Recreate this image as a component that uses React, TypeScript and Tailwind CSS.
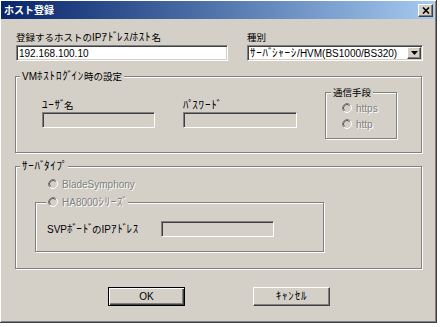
import React from "react";

// Win classic 3D edges
const sunken =
  "border border-t-[#808080] border-l-[#808080] border-r-white border-b-white shadow-[inset_1px_1px_0_#404040,inset_-1px_-1px_0_#d4d0c8]";
const raised =
  "border border-t-white border-l-white border-r-[#404040] border-b-[#404040] shadow-[inset_-1px_-1px_0_#808080,inset_1px_1px_0_#d4d0c8]";
const etched =
  "border border-[#808080] shadow-[inset_1px_1px_0_#fff,1px_1px_0_#fff]";
const disabledText = "text-[#808080] [text-shadow:1px_1px_0_#fff]";

// split mixed text so kanji/kana get a narrower size, half-width kana get spacing
// and the half-width dakuten sit tight against the previous kana
function J({ children }: { children: string }) {
  const runs =
    children.match(
      /[\uFF9E\uFF9F]+|[\uFF61-\uFF9D]+|[\u3000-\u30FF\u4E00-\u9FFF]+|[^\u3000-\u30FF\u4E00-\u9FFF\uFF61-\uFF9F]+/g
    ) ?? [];
  return (
    <>
      {runs.map((r, i) => {
        const c = r.charCodeAt(0);
        if (c === 0xff9e || c === 0xff9f)
          return (
            <span key={i} className="ml-[-1px] text-[11px] tracking-[-1.5px]">
              {r}
            </span>
          );
        if (c >= 0xff61 && c <= 0xff9d)
          return (
            <span key={i} className="text-[11px] tracking-[0.8px]">
              {r}
            </span>
          );
        if (c >= 0x3000 && c <= 0x9fff)
          return (
            <span key={i} className="text-[9.5px]">
              {r}
            </span>
          );
        return <span key={i}>{r}</span>;
      })}
    </>
  );
}

function Radio() {
  return (
    <svg width="10" height="10" viewBox="0 0 10 10" className="shrink-0">
      <circle cx="5" cy="5" r="4.5" fill="#d4d0c8" />
      <path d="M1.82 8.18 A4.5 4.5 0 0 1 8.18 1.82" fill="none" stroke="#808080" strokeWidth="1" />
      <path d="M8.18 1.82 A4.5 4.5 0 0 1 1.82 8.18" fill="none" stroke="#ffffff" strokeWidth="1" />
      <path d="M2.52 7.48 A3.5 3.5 0 0 1 7.48 2.52" fill="none" stroke="#404040" strokeWidth="0.8" />
    </svg>
  );
}

function RadioRow({ label, className }: { label: string; className?: string }) {
  return (
    <div className={"flex h-[16px] items-center gap-[4px] " + (className ?? "")}>
      <Radio />
      <span className={"whitespace-nowrap " + disabledText}>
        <J>{label}</J>
      </span>
    </div>
  );
}

export default function App() {
  return (
    <div className="min-h-screen bg-white font-['Liberation_Sans','Noto_Sans_CJK_JP',sans-serif] text-[10px] leading-[13px] text-black">
      <div className="h-[323px] w-[437px] border-r border-b border-r-[#404040] border-b-[#404040] bg-[#d4d0c8] pt-[1px] pr-[2px] pl-[1px] shadow-[inset_1px_1px_0_#fff,inset_-1px_-1px_0_#808080]">
        {/* title bar */}
        <div className="flex h-[18px] items-center justify-between bg-linear-to-r from-[#0a246a] to-[#a6caf0] pl-[3px]">
          <span className="text-[10px] font-bold text-white">ホスト登録</span>
          <div className={"mr-[1px] flex h-[13px] w-[15px] items-center justify-center bg-[#d4d0c8] " + raised}>
            <svg width="8" height="7" viewBox="0 0 8 7">
              <path d="M1 0.5 L7 6.5 M7 0.5 L1 6.5" stroke="#000" strokeWidth="1.6" />
            </svg>
          </div>
        </div>

        {/* host + type */}
        <div className="mt-[12px] flex">
          <div className="ml-[15px] w-[212px]">
            <div className="whitespace-nowrap">
              <J>登録するホストのIPｱﾄﾞﾚｽ/ﾎｽﾄ名</J>
            </div>
            <div className={"mt-[1px] flex h-[16px] items-center bg-white pl-[2px] " + sunken}>192.168.100.10</div>
          </div>
          <div className="ml-[19px] w-[176px]">
            <div>
              <J>種別</J>
            </div>
            <div className={"mt-[1px] flex h-[16px] items-center justify-between bg-white pl-[2px] pr-[1px] " + sunken}>
              <span className="whitespace-nowrap">
                <J>ｻｰﾊﾞｼｬｰｼ/HVM(BS1000/BS320)</J>
              </span>
              <div className={"flex h-[12px] w-[14px] shrink-0 items-center justify-center bg-[#d4d0c8] " + raised}>
                <svg width="7" height="4" viewBox="0 0 7 4">
                  <path d="M0 0 H7 L3.5 4 Z" fill="#000" />
                </svg>
              </div>
            </div>
          </div>
        </div>

        {/* VM login settings */}
        <fieldset className={"mt-[9px] ml-[14px] w-[407px] " + etched}>
          <legend className="ml-[4px] bg-[#d4d0c8] px-[2px]">
            <J>VMﾎｽﾄﾛｸﾞｲﾝ時の設定</J>
          </legend>
          <div className="flex items-start pb-[13px]">
            <div className="mt-[16px] ml-[26px] w-[113px]">
              <div>
                <J>ﾕｰｻﾞ名</J>
              </div>
              <div className={"h-[16px] " + sunken} />
            </div>
            <div className="mt-[16px] ml-[28px] w-[114px]">
              <div>
                <J>ﾊﾟｽﾜｰﾄﾞ</J>
              </div>
              <div className={"h-[16px] " + sunken} />
            </div>
            <fieldset className={"mt-[3px] ml-[28px] w-[72px] " + etched}>
              <legend className="ml-[5px] bg-[#d4d0c8] px-[2px]">
                <J>通信手段</J>
              </legend>
              <div className="pt-[1px] pb-[6px] pl-[16px]">
                <RadioRow label="https" />
                <RadioRow label="http" />
              </div>
            </fieldset>
          </div>
        </fieldset>

        {/* server type */}
        <fieldset className={"mt-[7px] ml-[14px] w-[407px] " + etched}>
          <legend className="ml-[4px] bg-[#d4d0c8] px-[2px]">
            <J>ｻｰﾊﾞﾀｲﾌﾟ</J>
          </legend>
          <div className="pb-[16px]">
            <RadioRow label="BladeSymphony" className="mt-[3px] pl-[32px]" />
            <fieldset className={"mt-[2px] ml-[19px] w-[289px] " + etched}>
              <legend className="ml-[10px] bg-[#d4d0c8] px-[2px]">
                <RadioRow label="HA8000ｼﾘｰｽﾞ" />
              </legend>
              <div className="mt-[11px] flex items-center pb-[14px]">
                <span className="ml-[11px] w-[114px] whitespace-nowrap">
                  <J>SVPﾎﾞｰﾄﾞのIPｱﾄﾞﾚｽ</J>
                </span>
                <div className={"h-[16px] w-[113px] " + sunken} />
              </div>
            </fieldset>
          </div>
        </fieldset>

        {/* buttons */}
        <div className="mt-[18px] flex">
          <button className="ml-[107px] flex h-[19px] w-[77px] items-center justify-center border border-black bg-[#d4d0c8] shadow-[inset_1px_1px_0_#fff,inset_-1px_-1px_0_#404040,inset_-2px_-2px_0_#808080]">
            OK
          </button>
          <button className={"ml-[68px] flex h-[19px] w-[77px] items-center justify-center bg-[#d4d0c8] " + raised}>
            <J>ｷｬﾝｾﾙ</J>
          </button>
        </div>
      </div>
    </div>
  );
}
